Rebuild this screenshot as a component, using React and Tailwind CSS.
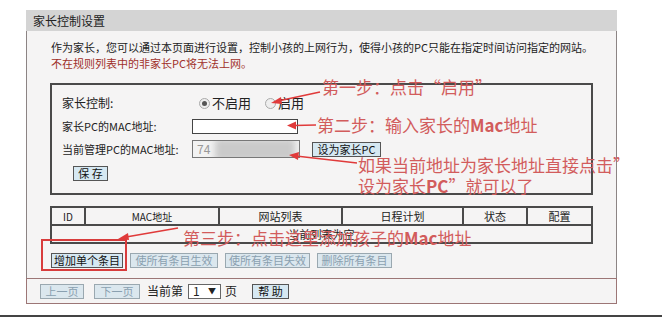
import React from "react";

const font = { fontFamily: '"Noto Sans CJK SC", "Noto Sans", sans-serif' };

function Btn({ children, disabled, className = "" }) {
  return (
    <div
      className={
        "flex items-center justify-center h-[15px] text-[11px] leading-none whitespace-nowrap border " +
        (disabled
          ? "border-[#9aa8b0] bg-[#dbe7ee] text-[#8aa0b0] "
          : "border-[#555] bg-[#d6e8f2] text-[#111] ") +
        className
      }
    >
      {children}
    </div>
  );
}

function Radio({ checked }) {
  return (
    <div className="w-[11px] h-[11px] rounded-full border border-[#aaa] bg-[#eee] flex items-center justify-center">
      {checked && <div className="w-[5px] h-[5px] rounded-full bg-[#555]" />}
    </div>
  );
}

export default function App() {
  const red = "text-[#d25c5c] whitespace-nowrap";
  return (
    <div className="relative w-[662px] h-[318px] bg-white overflow-hidden text-[#222]" style={font}>
      <div className="ml-[26px] pt-[10px] w-[591px]">
        <div className="h-[21px] bg-[#d4d4d4] flex items-center px-[7px] text-[12px]">家长控制设置</div>
        <div className="border-l border-r border-[#8c8484] bg-[#f5f4f4] pl-[23px] pt-[8px] pb-[10px]">
          <div className="text-[11px] leading-[16px] pl-[1px] whitespace-nowrap">作为家长，您可以通过本页面进行设置，控制小孩的上网行为，使得小孩的PC只能在指定时间访问指定的网站。</div>
          <div className="text-[11px] leading-[16px] pl-[1px] text-[#a0302a] whitespace-nowrap">不在规则列表中的非家长PC将无法上网。</div>
          <div className="mt-[12px] w-[543px] border-2 border-[#4a4a4a] pl-[10px] pt-[10px] pb-[12px] text-[12px] whitespace-nowrap">
            <div className="flex items-center h-[16px]">
              <div className="w-[137px]">家长控制:</div>
              <Radio checked />
              <span className="ml-[2px] text-[13px]">不启用</span>
              <div className="ml-[14px]"><Radio /></div>
              <span className="ml-[2px] text-[13px]">启用</span>
            </div>
            <div className="flex items-center h-[15px] mt-[8px]">
              <div className="w-[130px] text-[11px]">家长PC的MAC地址:</div>
              <div className="w-[106px] h-[15px] border border-[#444] bg-white" />
            </div>
            <div className="flex items-center h-[18px] mt-[6px]">
              <div className="w-[130px] text-[11px]">当前管理PC的MAC地址:</div>
              <div className="relative w-[108px] h-[18px] border border-[#777] bg-[#f2f2f2] flex items-center overflow-hidden">
                <span className="ml-[4px] text-[#999] text-[12px]">74</span>
                <div className="absolute left-[22px] top-[-2px] w-[80px] h-[22px] bg-[#cacaca] blur-[3px]" />
              </div>
              <Btn className="ml-[12px] w-[69px] h-[15px]">设为家长PC</Btn>
            </div>
            <Btn className="mt-[8px] ml-[11px] w-[35px] h-[14px]">保 存</Btn>
          </div>
          <div className="mt-[11px] w-[543px] border-2 border-[#4a4a4a] text-[11px] whitespace-nowrap">
            <div className="flex h-[18px] border-b-2 border-[#4a4a4a]">
              <div className="w-[34px] flex items-center justify-center border-r-2 border-[#4a4a4a] text-[10px]">ID</div>
              <div className="w-[134px] flex items-center justify-center border-r-2 border-[#4a4a4a] text-[10px]">MAC地址</div>
              <div className="w-[123px] flex items-center justify-center border-r-2 border-[#4a4a4a]">网站列表</div>
              <div className="w-[121px] flex items-center justify-center border-r-2 border-[#4a4a4a]">日程计划</div>
              <div className="w-[64px] flex items-center justify-center border-r-2 border-[#4a4a4a]">状态</div>
              <div className="flex-1 flex items-center justify-center">配置</div>
            </div>
            <div className="h-[16px] flex items-center justify-center">当前列表为空</div>
          </div>
          <div className="flex mt-[9px] gap-[7px] pl-[1px]">
            <Btn className="w-[72px]">增加单个条目</Btn>
            <Btn disabled className="w-[88px]">使所有条目生效</Btn>
            <Btn disabled className="w-[85px]">使所有条目失效</Btn>
            <Btn disabled className="w-[75px]">删除所有条目</Btn>
          </div>
        </div>
        <div className="border border-[#9c7676] bg-[#f5f4f4] h-[26px] flex items-center pl-[13px] text-[12px] whitespace-nowrap">
          <Btn disabled className="w-[44px] h-[13px]">上一页</Btn>
          <Btn disabled className="ml-[10px] w-[46px] h-[13px]">下一页</Btn>
          <span className="ml-[7px]">当前第</span>
          <div className="ml-[5px] w-[33px] h-[15px] border border-[#666] bg-white flex items-center justify-between px-[4px] text-[12px]">
            <span>1</span><span className="text-[8px]">▼</span>
          </div>
          <span className="ml-[4px]">页</span>
          <Btn className="ml-[15px] w-[37px] h-[14px]">帮 助</Btn>
        </div>
      </div>
      <div className="absolute left-0 right-0 top-[315px] h-[2px] bg-[#444]" />

      {/* annotation rectangle */}
      <div className="absolute left-[41px] top-[239px] w-[86px] h-[32px] border-2 border-[#d83c3c]" />

      {/* annotations */}
      <div className={"absolute left-[322px] top-[77px] text-[17px] leading-[20px] " + red}>第一步：点击“启用”</div>
      <div className={"absolute left-[317px] top-[115px] text-[17px] leading-[20px] " + red}>第二步：输入家长的<span className="font-semibold">Mac</span>地址</div>
      <div className={"absolute left-[358px] top-[154px] text-[17px] leading-[21px] " + red}>
        如果当前地址为家长地址直接点击”<br />设为家长<span className="font-semibold">PC</span>”就可以了
      </div>
      <div className={"absolute left-[183px] top-[228px] text-[17px] leading-[20px] " + red}>第三步：点击这里添加孩子的<span className="font-semibold">Mac</span>地址</div>

      <svg className="absolute left-0 top-0" width="662" height="318" viewBox="0 0 662 318">
        <g stroke="#e03a3a" strokeWidth="1.6" fill="none">
          <line x1="320" y1="92" x2="278" y2="101" />
          <line x1="316" y1="125" x2="294" y2="125.5" />
          <line x1="357" y1="163" x2="296" y2="156" />
          <line x1="178" y1="228" x2="126" y2="237" />
        </g>
        <g fill="#e03a3a">
          <polygon points="271,103 281,97 282,104" />
          <polygon points="287,125.5 296,121.5 296,129.5" />
          <polygon points="289,155 299,152 298,160" />
          <polygon points="118,239 128,233 129,240" />
        </g>
      </svg>
    </div>
  );
}
